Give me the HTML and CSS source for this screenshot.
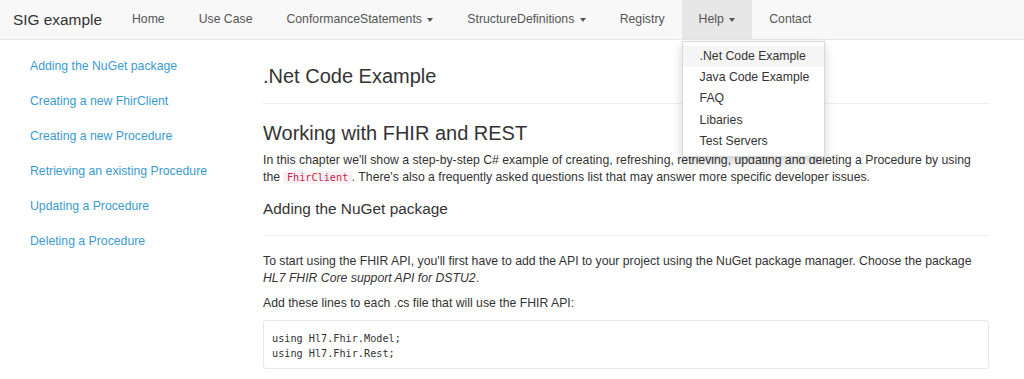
FILE: index.html
```html
<!DOCTYPE html>
<html>
<head>
	<title>SIG example - .Net Code Example</title>
	<link rel="stylesheet" href="styles.css">
</head>
<body>
	<nav class="navbar">
		<a class="brand" href="#">SIG example</a>
		<ul class="nav">
			<li><a href="#">Home</a></li>
			<li><a href="#">Use Case</a></li>
			<li><a href="#">ConformanceStatements <span class="caret"></span></a></li>
			<li><a href="#">StructureDefinitions <span class="caret"></span></a></li>
			<li><a href="#">Registry</a></li>
			<li class="open">
				<a href="#">Help <span class="caret"></span></a>
				<ul class="dropdown">
					<li class="hover"><a href="#">.Net Code Example</a></li>
					<li><a href="#">Java Code Example</a></li>
					<li><a href="#">FAQ</a></li>
					<li><a href="#">Libaries</a></li>
					<li><a href="#">Test Servers</a></li>
				</ul>
			</li>
			<li><a href="#">Contact</a></li>
		</ul>
	</nav>

	<div class="main">
		<ul class="sidebar">
			<li><a href="#">Adding the NuGet package</a></li>
			<li><a href="#">Creating a new FhirClient</a></li>
			<li><a href="#">Creating a new Procedure</a></li>
			<li><a href="#">Retrieving an existing Procedure</a></li>
			<li><a href="#">Updating a Procedure</a></li>
			<li><a href="#">Deleting a Procedure</a></li>
		</ul>

		<div class="content">
			<h1 class="page-header">.Net Code Example</h1>

			<h2>Working with FHIR and REST</h2>
			<p class="intro">In this chapter we'll show a step-by-step C# example of creating, refreshing, retrieving, updating and deleting a Procedure by using the <code>FhirClient</code>. There's also a frequently asked questions list that may answer more specific developer issues.</p>

			<h3 class="section-header">Adding the NuGet package</h3>
			<p class="first">To start using the FHIR API, you'll first have to add the API to your project using the NuGet package manager. Choose the package <em>HL7 FHIR Core support API for DSTU2</em>.</p>
			<p>Add these lines to each .cs file that will use the FHIR API:</p>
			<pre>using Hl7.Fhir.Model;
using Hl7.Fhir.Rest;</pre>
		</div>
	</div>
</body>
</html>
```

FILE: styles.css
```css
* {
	margin: 0;
	padding: 0;
	box-sizing: border-box;
}

body {
	font-family: "Liberation Sans", Arial, sans-serif;
	font-size: 12.25px;
	line-height: 17px;
	color: #333;
	background-color: #fff;
}

a {
	text-decoration: none;
}

ul {
	list-style: none;
}

/* top navigation */
.navbar {
	display: flex;
	height: 40px;
	background-color: #f8f8f8;
	border-bottom: 1px solid #e7e7e7;
}

.brand {
	padding: 0 13px 0 13px;
	font-size: 15.4px;
	line-height: 39px;
	color: #333;
}

.nav {
	display: flex;
}

.nav > li {
	position: relative;
}

.nav > li > a {
	display: block;
	padding: 0 17px;
	font-size: 12.25px;
	line-height: 39px;
	color: #555;
}

.nav > li.open > a {
	background-color: #e7e7e7;
}

.caret {
	display: inline-block;
	width: 0;
	height: 0;
	margin-left: 2px;
	vertical-align: middle;
	border-top: 4px solid #555;
	border-left: 3.5px solid transparent;
	border-right: 3.5px solid transparent;
}

.dropdown {
	position: absolute;
	top: 41px;
	left: 0;
	width: 143px;
	padding: 3.5px 0;
	background-color: #fff;
	border: 1px solid rgba(0, 0, 0, .15);
	box-shadow: 0 5px 10px rgba(0, 0, 0, .175);
	z-index: 10;
}

.dropdown li a {
	display: block;
	padding: 2.2px 17px;
	color: #333;
	white-space: nowrap;
}

.dropdown li.hover a {
	background-color: #f5f5f5;
}

/* page body */
.main {
	display: flex;
}

.sidebar {
	width: 250px;
	flex-shrink: 0;
	padding: 9px 0 0 30px;
}

.sidebar li a {
	display: block;
	padding: 9px 0;
	color: #3a9bd0;
}

.content {
	flex: 1;
	padding: 0 35px 0 13px;
}

h1, h2, h3 {
	font-weight: normal;
}

h1 {
	font-size: 20px;
	line-height: 22px;
}

h2 {
	margin-top: 18px;
	font-size: 20px;
	line-height: 22px;
}

h3 {
	margin-top: 14px;
	font-size: 15.4px;
	line-height: 17px;
}

.page-header {
	margin-top: 25px;
	padding-bottom: 16px;
	border-bottom: 1px solid #eee;
}

.section-header {
	padding-bottom: 18px;
	border-bottom: 1px solid #eee;
}

p {
	margin-bottom: 8px;
}

p.intro {
	margin-top: 8px;
}

p.first {
	margin-top: 17px;
}

code {
	padding: 1px 3.5px;
	font-family: "DejaVu Sans Mono", monospace;
	font-size: 10.2px;
	color: #c7254e;
	background-color: #f9f2f4;
	border-radius: 3px;
}

pre {
	padding: 10px 8px 7px;
	font-family: "DejaVu Sans Mono", monospace;
	font-size: 10.2px;
	line-height: 15px;
	color: #333;
	background-color: #fff;
	border: 1px solid #e8e8e8;
	border-radius: 3px;
}
```
